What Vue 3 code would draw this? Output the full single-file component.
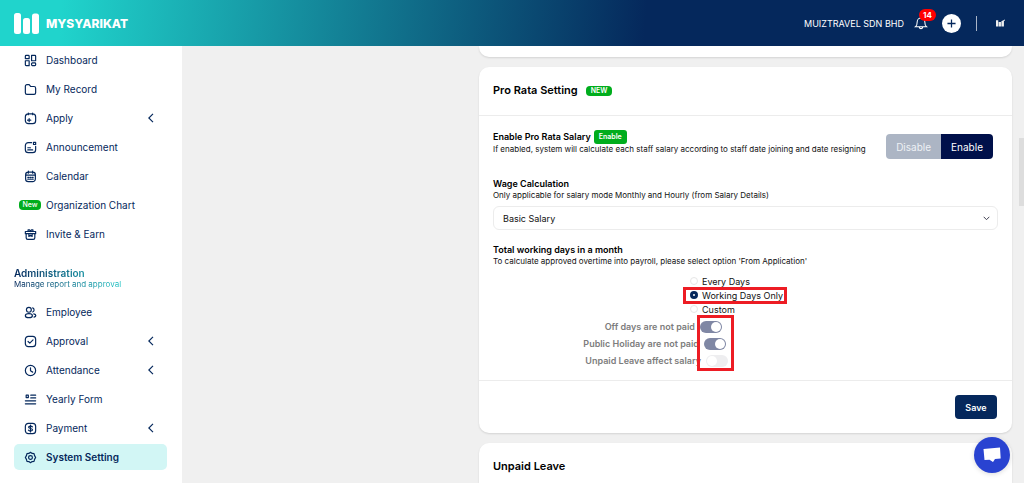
<script setup>
import { ref } from 'vue'

const mainMenu = [
  { label: 'Dashboard', icon: 'grid' },
  { label: 'My Record', icon: 'folder' },
  { label: 'Apply', icon: 'apply', sub: true },
  { label: 'Announcement', icon: 'news' },
  { label: 'Calendar', icon: 'calendar' },
  { label: 'Organization Chart', badge: 'New' },
  { label: 'Invite & Earn', icon: 'gift' },
]
const adminMenu = [
  { label: 'Employee', icon: 'people' },
  { label: 'Approval', icon: 'check', sub: true },
  { label: 'Attendance', icon: 'clock', sub: true },
  { label: 'Yearly Form', icon: 'form' },
  { label: 'Payment', icon: 'dollar', sub: true },
  { label: 'System Setting', icon: 'gear', active: true },
]
const menus = [
  { id: 'main', items: mainMenu },
  { id: 'admin', title: 'Administration', note: 'Manage report and approval', items: adminMenu },
]

const icons = {
  grid: 'M4 2.500h4a1.500 1.500 0 0 1 1.500 1.500v4.500h-7V4A1.500 1.500 0 0 1 4 2.500zM14 2.500h6a1.500 1.500 0 0 1 1.500 1.500v8.500h-7.500zM2.500 12.500h7v9H4A1.500 1.500 0 0 1 2.500 20zM15.500 16.500h4.500a1.500 1.500 0 0 1 1.500 1.500v2a1.500 1.500 0 0 1-1.500 1.500h-4.500a2 2 0 0 1-1.500-1.500v-2a2 2 0 0 1 1.500-1.500z',
  folder: 'M2.500 6a3 3 0 0 1 3-3h4l3 3.500h6a3 3 0 0 1 3 3V18a3 3 0 0 1-3 3h-13a3 3 0 0 1-3-3z',
  apply: 'M8 3.500h8a5.500 5.500 0 0 1 5.500 5.500v7a5.500 5.500 0 0 1-5.500 5.500H8A5.500 5.500 0 0 1 2.500 16V9A5.500 5.500 0 0 1 8 3.500zM8 2v3M16 2v3M9.500 12v6M6.500 15h6',
  news: 'M14 3H8a5.500 5.500 0 0 0-5.500 5.500v7.500A5.500 5.500 0 0 0 8 21.500h8a5.500 5.500 0 0 0 5.500-5.500v-6M7 12.500h5M7 16.500h9M17.500 2.500h4v4h-4z',
  calendar: 'M3 9a5 5 0 0 1 5-5h8a5 5 0 0 1 5 5v7.500a5 5 0 0 1-5 5H8a5 5 0 0 1-5-5zM3 9.500h18M8 2v4M16 2v4M7 13.500h2M11 13.500h2M15 13.500h2M7 17h2M11 17h2M15 17h2',
  gift: 'M2.500 6.500h19v4h-19zM4 10.500V18a3 3 0 0 0 3 3h10a3 3 0 0 0 3-3v-7.500M9 10.500v5l3-2 3 2v-5M7.500 6.500V3.500h3l1.500 3 1.500-3h3v3',
  people: 'M9 2.500a4.500 4.500 0 1 1 0 9 4.500 4.500 0 0 1 0-9zM9 14c4 0 6.500 1.500 6.500 3.800S13 21.500 9 21.500s-6.500-1.400-6.500-3.700S5 14 9 14zM16 3.500a4 4 0 0 1 0 7.500M18 14.500c5 1 5 5 .5 6',
  check: 'M8 2.500h8a5.500 5.500 0 0 1 5.500 5.500v8a5.500 5.500 0 0 1-5.500 5.500H8A5.500 5.500 0 0 1 2.500 16V8A5.500 5.500 0 0 1 8 2.500zM7.500 12l3.200 3 6-6',
  clock: 'M12 2.500a9.500 9.500 0 1 1 0 19 9.500 9.500 0 0 1 0-19zM12 7v5.500l4 2.500',
  form: 'M4 4h4v4.500H4zM12.500 4h9M12.500 9h9M2.500 14.500h19M2.500 20h19',
  dollar: 'M8 2.500h8a5.500 5.500 0 0 1 5.500 5.500v8a5.500 5.500 0 0 1-5.500 5.500H8A5.500 5.500 0 0 1 2.500 16V8A5.500 5.500 0 0 1 8 2.500zM15.500 9c-1.500-2-7-1.800-7 .7 0 3 7.200 1.500 7.200 4.700 0 2.800-6 3-7.500.7M12 5.500v13',
  gear: 'M9 4.500 12 2.500l3 2 3.500.5 1 3.500 2 3.500-2 3.500-1 3.500-3.500.5-3 2-3-2-3.500-.5-1-3.500-2-3.500 2-3.500 1-3.500zM12 8.500a3.500 3.500 0 1 1 0 7 3.500 3.500 0 0 1 0-7z',
}

const payMode = ref('enable')
const wage = ref('Basic Salary')
const days = ref('working')
const dayOptions = [
  { id: 'every', label: 'Every Days' },
  { id: 'working', label: 'Working Days Only' },
  { id: 'custom', label: 'Custom' },
]
const switches = ref([
  { id: 'off', label: 'Off days are not paid', on: true },
  { id: 'holiday', label: 'Public Holiday are not paid', on: true },
  { id: 'unpaid', label: 'Unpaid Leave affect salary', on: false },
])
</script>

<template>
  <div class="app">
    <header class="topbar">
      <a class="brand" href="#">
        <svg class="brand-mark" viewBox="0 0 25 21" aria-hidden="true">
          <rect x="0" y="0" width="7" height="21" rx="2.500" />
          <rect x="9" y="5" width="7" height="16" rx="2.500" />
          <rect x="18" y="0.500" width="7" height="20.500" rx="2.500" />
        </svg>
        <span>MYSYARIKAT</span>
      </a>
      <div class="tools">
        <span class="company">MUIZTRAVEL SDN BHD</span>
        <button class="bell" type="button" aria-label="Notifications">
          <svg viewBox="0 0 24 24"><path d="M2.500 18.500c3-2 3-5 3-8.500a6.500 6.500 0 0 1 13 0c0 3.500 0 6.500 3 8.500zM9 19c.5 3.500 5.500 3.500 6 0" /></svg>
          <span class="count">14</span>
        </button>
        <button class="plus" type="button" aria-label="Add">
          <svg viewBox="0 0 10 10"><path d="M5 .5v9M.5 5h9" /></svg>
        </button>
        <span class="rule"></span>
        <a class="avatar" href="#" aria-label="Account">
          <svg viewBox="0 0 10 8"><path d="M0 1h2.500v7H0zM3 3h2.500v5H3zM6 2l4-2v1L8.800 2v6H6z" /></svg>
        </a>
      </div>
    </header>

    <div class="layout">
      <nav class="sidebar" aria-label="Menu">
        <template v-for="menu in menus" :key="menu.id">
          <div v-if="menu.title" class="group">
            <h2>{{ menu.title }}</h2>
            <p>{{ menu.note }}</p>
          </div>
          <ul>
            <li v-for="item in menu.items" :key="item.label">
              <a href="#" class="item" :class="{ active: item.active }">
                <span class="lead">
                  <svg v-if="item.icon" viewBox="0 0 24 24" aria-hidden="true"><path :d="icons[item.icon]" /></svg>
                  <span v-else class="new">{{ item.badge }}</span>
                </span>
                <span class="text">{{ item.label }}</span>
                <svg v-if="item.sub" class="chev" viewBox="0 0 6 10" aria-hidden="true"><path d="M5 .8.8 5 5 9.200" /></svg>
              </a>
            </li>
          </ul>
        </template>
      </nav>

      <main class="content">
        <div class="cards">
          <section class="card tail"></section>

          <section class="card">
            <header class="card-head">
              <h3>Pro Rata Setting</h3>
              <span class="tag">NEW</span>
            </header>
            <div class="card-body">
              <div class="row">
                <div>
                  <h4>Enable Pro Rata Salary <span class="tag state">Enable</span></h4>
                  <p>If enabled, system will calculate each staff salary according to staff date joining and date resigning</p>
                </div>
                <div class="seg">
                  <button type="button" :class="{ on: payMode === 'disable' }" @click="payMode = 'disable'">Disable</button>
                  <button type="button" :class="{ on: payMode === 'enable' }" @click="payMode = 'enable'">Enable</button>
                </div>
              </div>

              <div class="field">
                <h4><label for="wage">Wage Calculation</label></h4>
                <p>Only applicable for salary mode Monthly and Hourly (from Salary Details)</p>
                <div class="select">
                  <select id="wage" v-model="wage">
                    <option>Basic Salary</option>
                  </select>
                  <svg viewBox="0 0 7 5" aria-hidden="true"><path d="M.7.8 3.500 3.700 6.300.8" /></svg>
                </div>
              </div>

              <div class="days">
                <h4>Total working days in a month</h4>
                <p>To calculate approved overtime into payroll, please select option 'From Application'</p>
                <div class="radios">
                  <label v-for="o in dayOptions" :key="o.id" :class="{ marked: o.id === 'working' }">
                    <input v-model="days" type="radio" name="days" :value="o.id" />
                    <span>{{ o.label }}</span>
                  </label>
                </div>
                <div class="switches">
                  <label v-for="s in switches" :key="s.id" :class="s.id">
                    <span>{{ s.label }}</span>
                    <input v-model="s.on" type="checkbox" role="switch" />
                  </label>
                  <span class="frame"></span>
                </div>
              </div>
            </div>
            <footer class="card-foot">
              <button class="save" type="button">Save</button>
            </footer>
          </section>

          <section class="card">
            <header class="card-head">
              <h3>Unpaid Leave</h3>
            </header>
          </section>
        </div>
        <span class="thumb"></span>
      </main>
    </div>

    <button class="chat" type="button" aria-label="Open chat">
      <svg viewBox="0 0 18 16"><path d="M.5 2 17 .5l.7 11-5.700.5-2 3-3.500-2.300-5 .3z" /></svg>
    </button>
  </div>
</template>

<style>
body {
  margin: 0;
  overflow: hidden;
}
</style>

<style scoped>
*,
*::before,
*::after {
  box-sizing: border-box;
}
.app {
  height: 100vh;
  display: flex;
  flex-direction: column;
  font-family: Inter, "Noto Sans", sans-serif;
  font-size: 10px;
  color: #111;
  background: #f0f0f0;
}
h2, h3, h4, p, ul {
  margin: 0;
  padding: 0;
}
ul {
  list-style: none;
}
a {
  color: inherit;
  text-decoration: none;
}
button, input, select {
  font-family: inherit;
  margin: 0;
}
button {
  border: 0;
  padding: 0;
  cursor: pointer;
}
.topbar {
  flex: none;
  height: 46px;
  padding: 0 19px 0 14px;
  display: flex;
  align-items: center;
  justify-content: space-between;
  color: #fff;
  background: linear-gradient(95deg, #20d4cc 6%, #05285c 63%);
}
.brand {
  display: flex;
  align-items: center;
  gap: 7px;
  font-size: 12px;
  font-weight: 800;
}
.brand-mark {
  width: 25px;
  height: 21px;
  fill: #fff;
}
.tools {
  display: flex;
  align-items: center;
}
.company {
  font-size: 9px;
  margin-right: 10px;
}
.bell {
  position: relative;
  width: 14px;
  height: 14px;
  background: none;
}
.bell svg {
  display: block;
  width: 14px;
  height: 14px;
  fill: none;
  stroke: #fff;
  stroke-width: 1.8;
}
.count {
  position: absolute;
  left: 5px;
  top: -7px;
  width: 17px;
  height: 12px;
  border-radius: 6px;
  background: #f00;
  color: #fff;
  font-size: 8px;
  line-height: 12px;
  font-weight: 700;
}
.plus {
  width: 19px;
  height: 19px;
  margin-left: 14px;
  border-radius: 50%;
  background: #fff;
  display: grid;
  place-items: center;
}
.plus svg {
  width: 9px;
  height: 9px;
  stroke: #05285c;
  stroke-width: 1.4;
}
.rule {
  width: 1px;
  height: 15px;
  margin: 0 19px 0 15px;
  background: #a9b5c8;
}
.avatar svg {
  display: block;
  width: 9px;
  height: 8px;
  fill: #eee;
}
.layout {
  flex: 1;
  min-height: 0;
  display: flex;
}
.sidebar {
  flex: none;
  width: 182px;
  padding: 1px 15px 0 14px;
  background: #fff;
  color: #05285c;
}
.sidebar ul {
  display: flex;
  flex-direction: column;
  gap: 3px;
}
.item {
  display: flex;
  align-items: center;
  height: 26px;
  padding: 0 13px 0 4px;
  border-radius: 5px;
}
.item.active {
  background: #d2f6f5;
  font-weight: 600;
}
.lead {
  width: 24px;
  margin-right: 4px;
  display: grid;
  place-items: center;
}
.lead svg {
  width: 13px;
  height: 13px;
  fill: none;
  stroke: currentColor;
  stroke-width: 2.2;
  stroke-linejoin: round;
  stroke-linecap: round;
}
.new {
  width: 22px;
  height: 10px;
  border-radius: 4px;
  background: #00ad1d;
  color: #fff;
  font-size: 7px;
  line-height: 10px;
  font-weight: 500;
  text-align: center;
}
.text {
  flex: 1;
  white-space: nowrap;
}
.chev {
  width: 6px;
  height: 10px;
  fill: none;
  stroke: currentColor;
  stroke-width: 1.2;
}
.group {
  width: 107px;
  margin: 20px 0 9px;
  white-space: nowrap;
  color: transparent;
  background: linear-gradient(90deg, #05285c, #20c4c4);
  background-clip: text;
}
.group h2 {
  font-size: 10px;
  line-height: 12px;
  font-weight: 600;
}
.group p {
  font-size: 8px;
  line-height: 11px;
}
.content {
  position: relative;
  flex: 1;
  min-width: 0;
  overflow: hidden;
  display: grid;
  grid-template-columns: 297px 1fr;
  padding-right: 12px;
}
.cards {
  grid-column: 2;
  display: flex;
  flex-direction: column;
  gap: 10px;
}
.card {
  border-radius: 10px;
  background: #fff;
  box-shadow: 0 1px 2px rgba(0, 0, 0, 0.12);
}
.tail {
  height: 11px;
  border-top-left-radius: 0;
  border-top-right-radius: 0;
}
.card-head {
  display: flex;
  align-items: center;
  gap: 8px;
  height: 49px;
  padding: 0 14px 3px;
  border-bottom: 1px solid #ececec;
}
h3 {
  font-size: 11px;
  font-weight: 600;
  color: #000;
}
.tag {
  padding: 0 5px;
  height: 10px;
  border-radius: 4px;
  background: #00ad1d;
  color: #fff;
  font-size: 7px;
  line-height: 10px;
  font-weight: 600;
}
.card-head .tag {
  margin-top: 3px;
}
.tag.state {
  height: 14px;
  line-height: 14px;
  border-radius: 3px;
}
.card-body {
  padding: 14px 14px 11px;
}
h4 {
  display: flex;
  align-items: center;
  gap: 3px;
  font-size: 9px;
  line-height: 12px;
  font-weight: 600;
  color: #000;
}
p {
  font-size: 8px;
  line-height: 11px;
}
.row {
  display: flex;
  justify-content: space-between;
  align-items: flex-start;
  padding-right: 5px;
}
.seg {
  display: flex;
  margin-top: 4px;
  border-radius: 4px;
  overflow: hidden;
}
.seg button {
  height: 25px;
  padding: 0 10px;
  font-size: 10px;
  color: #eef1f5;
  background: #acb5c4;
}
.seg button.on {
  color: #fff;
  background: #00104a;
}
.field {
  margin-top: 19px;
}
.select {
  position: relative;
  margin-top: 5px;
}
.select select {
  display: block;
  width: 100%;
  height: 24px;
  padding: 0 9px;
  appearance: none;
  border: 1px solid #ececec;
  border-radius: 6px;
  background: #fff;
  font-size: 9px;
  color: #111;
}
.select svg {
  position: absolute;
  right: 8px;
  top: 10px;
  width: 7px;
  height: 5px;
  fill: none;
  stroke: #445;
}
.days {
  margin-top: 14px;
}
.radios {
  margin-top: 7px;
  display: flex;
  flex-direction: column;
  align-items: flex-start;
  padding-left: 190px;
}
.radios label {
  display: flex;
  align-items: center;
  gap: 4px;
  height: 14px;
  padding-left: 7px;
  font-size: 9px;
  white-space: nowrap;
}
.radios label.marked {
  position: relative;
}
.radios label.marked::after {
  content: "";
  position: absolute;
  left: 0;
  top: -1px;
  width: 104px;
  height: 17px;
  border: 3px solid #ed1c24;
}
.radios input {
  appearance: none;
  width: 8px;
  height: 8px;
  border: 1px solid #e6e6e6;
  border-radius: 50%;
  background: #fff;
}
.radios input:checked {
  border: 3px solid #05285c;
}
.switches {
  position: relative;
  margin-top: 2px;
}
.switches label {
  display: flex;
  align-items: center;
  gap: 5px;
  height: 17px;
  font-weight: 600;
  font-size: 9px;
  color: #7d7d7d;
}
.switches label span {
  text-align: right;
  white-space: nowrap;
}
.off span {
  width: 202px;
}
.holiday span {
  width: 206px;
}
.unpaid span {
  width: 208px;
}
.switches input {
  appearance: none;
  width: 22px;
  height: 12px;
  padding: 1px;
  border-radius: 6px;
  background: #eeeef0;
  display: flex;
}
.switches input::before {
  content: "";
  width: 10px;
  height: 10px;
  border-radius: 50%;
  background: #fff;
}
.switches input:checked {
  background: #7f87a4;
  justify-content: flex-end;
}
.frame {
  position: absolute;
  left: 204px;
  top: -3px;
  width: 37px;
  height: 56px;
  border: 3px solid #ed1c24;
}
.card-foot {
  display: flex;
  justify-content: flex-end;
  padding: 14px 15px;
  border-top: 1px solid #ececec;
}
.save {
  width: 42px;
  height: 24px;
  border-radius: 4px;
  background: #05285c;
  color: #fff;
  font-size: 9px;
  font-weight: 600;
}
.thumb {
  position: absolute;
  right: 0;
  top: 92px;
  width: 5px;
  height: 68px;
  background: #ddd;
}
.chat {
  position: fixed;
  right: 14px;
  bottom: 10px;
  width: 36px;
  height: 36px;
  border-radius: 50%;
  background: #2943d1;
  display: grid;
  place-items: center;
  box-shadow: 0 1px 5px rgba(0, 0, 0, 0.15);
}
.chat svg {
  width: 18px;
  height: 16px;
  fill: #fff;
}
</style>
